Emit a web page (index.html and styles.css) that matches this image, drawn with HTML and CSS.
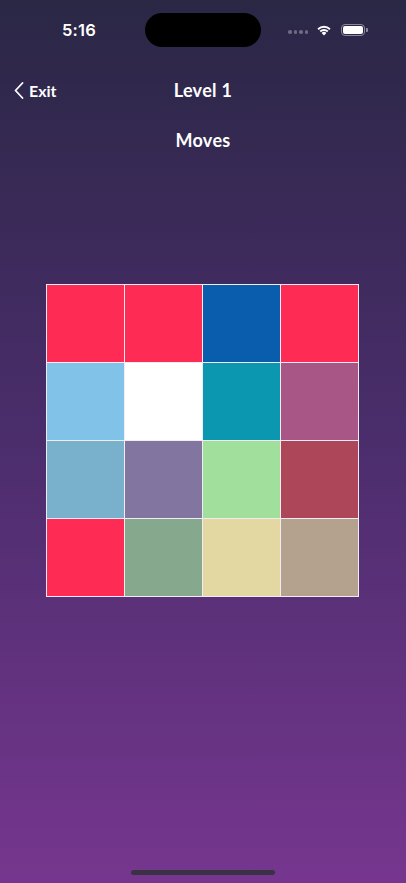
FILE: index.html
```html
<!DOCTYPE html>
<html>
<head>
<meta charset="utf-8">
<link rel="stylesheet" href="styles.css">
</head>
<body>
<div class="screen">
  <div class="status">
    <div class="time">5:16</div>
    <div class="island"></div>
    <div class="status-right">
      <div class="dots"><span></span><span></span><span></span><span></span></div>
      <svg class="wifi" width="16" height="12" viewBox="0 0 16 12">
        <path d="M8 11.5 L5.6 8.9 A3.4 3.4 0 0 1 10.4 8.9 Z" fill="#fff"/>
        <path d="M3.6 6.8 A6.3 6.3 0 0 1 12.4 6.8 L11.1 8.2 A4.4 4.4 0 0 0 4.9 8.2 Z" fill="#fff"/>
        <path d="M1.4 4.5 A9.4 9.4 0 0 1 14.6 4.5 L13.3 5.9 A7.5 7.5 0 0 0 2.7 5.9 Z" fill="#fff"/>
      </svg>
      <div class="battery"><div class="battery-fill"></div></div>
    </div>
  </div>
  <div class="nav">
    <div class="back">
      <svg width="10" height="17" viewBox="0 0 10 17"><path d="M8.5 1 L1.5 8.5 L8.5 16" fill="none" stroke="#fff" stroke-width="1.8" stroke-linecap="round" stroke-linejoin="round"/></svg>
      <span>Exit</span>
    </div>
    <div class="title">Level 1</div>
  </div>
  <div class="moves">Moves</div>
  <div class="board">
    <div class="cell" style="background:#fe2b55"></div>
    <div class="cell" style="background:#fe2b55"></div>
    <div class="cell" style="background:#0a5cad"></div>
    <div class="cell" style="background:#fe2b55"></div>
    <div class="cell" style="background:#81c3e8"></div>
    <div class="cell" style="background:#ffffff"></div>
    <div class="cell" style="background:#0b97b0"></div>
    <div class="cell" style="background:#a85686"></div>
    <div class="cell" style="background:#79b0cb"></div>
    <div class="cell" style="background:#8276a0"></div>
    <div class="cell" style="background:#a1e09c"></div>
    <div class="cell" style="background:#ad4659"></div>
    <div class="cell" style="background:#fe2b55"></div>
    <div class="cell" style="background:#86a88d"></div>
    <div class="cell" style="background:#e4d8a2"></div>
    <div class="cell" style="background:#b4a28f"></div>
  </div>
  <div class="spacer"></div>
  <div class="home"></div>
</div>
</body>
</html>
```

FILE: styles.css
```css
html, body {
  margin: 0;
  padding: 0;
}
body {
  width: 406px;
  height: 883px;
  overflow: hidden;
}
.screen {
  width: 406px;
  height: 883px;
  display: flex;
  flex-direction: column;
  background: linear-gradient(180deg, #2a2745 0%, #4b2d6c 50%, #76368f 100%);
  color: #fff;
  font-family: "Lato", "Open Sans", sans-serif;
}
.status {
  height: 60px;
  display: flex;
  align-items: flex-start;
  position: relative;
}
.time {
  font-family: "Inter", sans-serif;
  font-weight: 600;
  font-size: 16.5px;
  width: 78px;
  margin-left: 40px;
  text-align: center;
  padding-top: 20px;
  letter-spacing: 0.2px;
}
.island {
  width: 116px;
  height: 34px;
  border-radius: 17px;
  background: #000;
  margin-top: 13px;
  margin-left: 27px;
}
.status-right {
  display: flex;
  align-items: center;
  margin-left: 27px;
  margin-top: 23px;
  height: 14px;
}
.dots {
  display: flex;
  gap: 2px;
  margin-right: 8px;
  padding-top: 4px;
}
.dots span {
  width: 3.5px;
  height: 3.5px;
  border-radius: 50%;
  background: #6e6a85;
}
.wifi {
  margin-right: 9px;
}
.battery {
  width: 24px;
  height: 12px;
  border: 1.2px solid #8a879c;
  border-radius: 4px;
  padding: 1.3px;
  box-sizing: border-box;
  position: relative;
}
.battery::after {
  content: "";
  position: absolute;
  right: -3.5px;
  top: 3.2px;
  width: 1.6px;
  height: 4px;
  border-radius: 0 1px 1px 0;
  background: #8a879c;
}
.battery-fill {
  width: 100%;
  height: 100%;
  background: #fff;
  border-radius: 2px;
}
.nav {
  height: 60px;
  display: flex;
  align-items: center;
  position: relative;
}
.back {
  display: flex;
  align-items: center;
  margin-left: 14px;
  gap: 5px;
  font-size: 16px;
  font-weight: 700;
}
.title {
  position: absolute;
  left: 0;
  right: 0;
  text-align: center;
  font-size: 18px;
  font-weight: 700;
  letter-spacing: 0.3px;
}
.moves {
  text-align: center;
  font-size: 18px;
  font-weight: 700;
  letter-spacing: 0.3px;
  margin-top: 10px;
  height: 20px;
  line-height: 20px;
}
.board {
  margin: 134px 0 0 46px;
  width: 313px;
  height: 313px;
  box-sizing: border-box;
  background: #f1ecf4;
  padding: 1px;
  display: grid;
  grid-template-columns: repeat(4, 77px);
  grid-template-rows: repeat(4, 77px);
  gap: 1px;
}
.spacer {
  flex: 1;
}
.home {
  width: 144px;
  height: 5px;
  border-radius: 3px;
  background: #3b3144;
  margin: 0 auto 8px auto;
}
```
